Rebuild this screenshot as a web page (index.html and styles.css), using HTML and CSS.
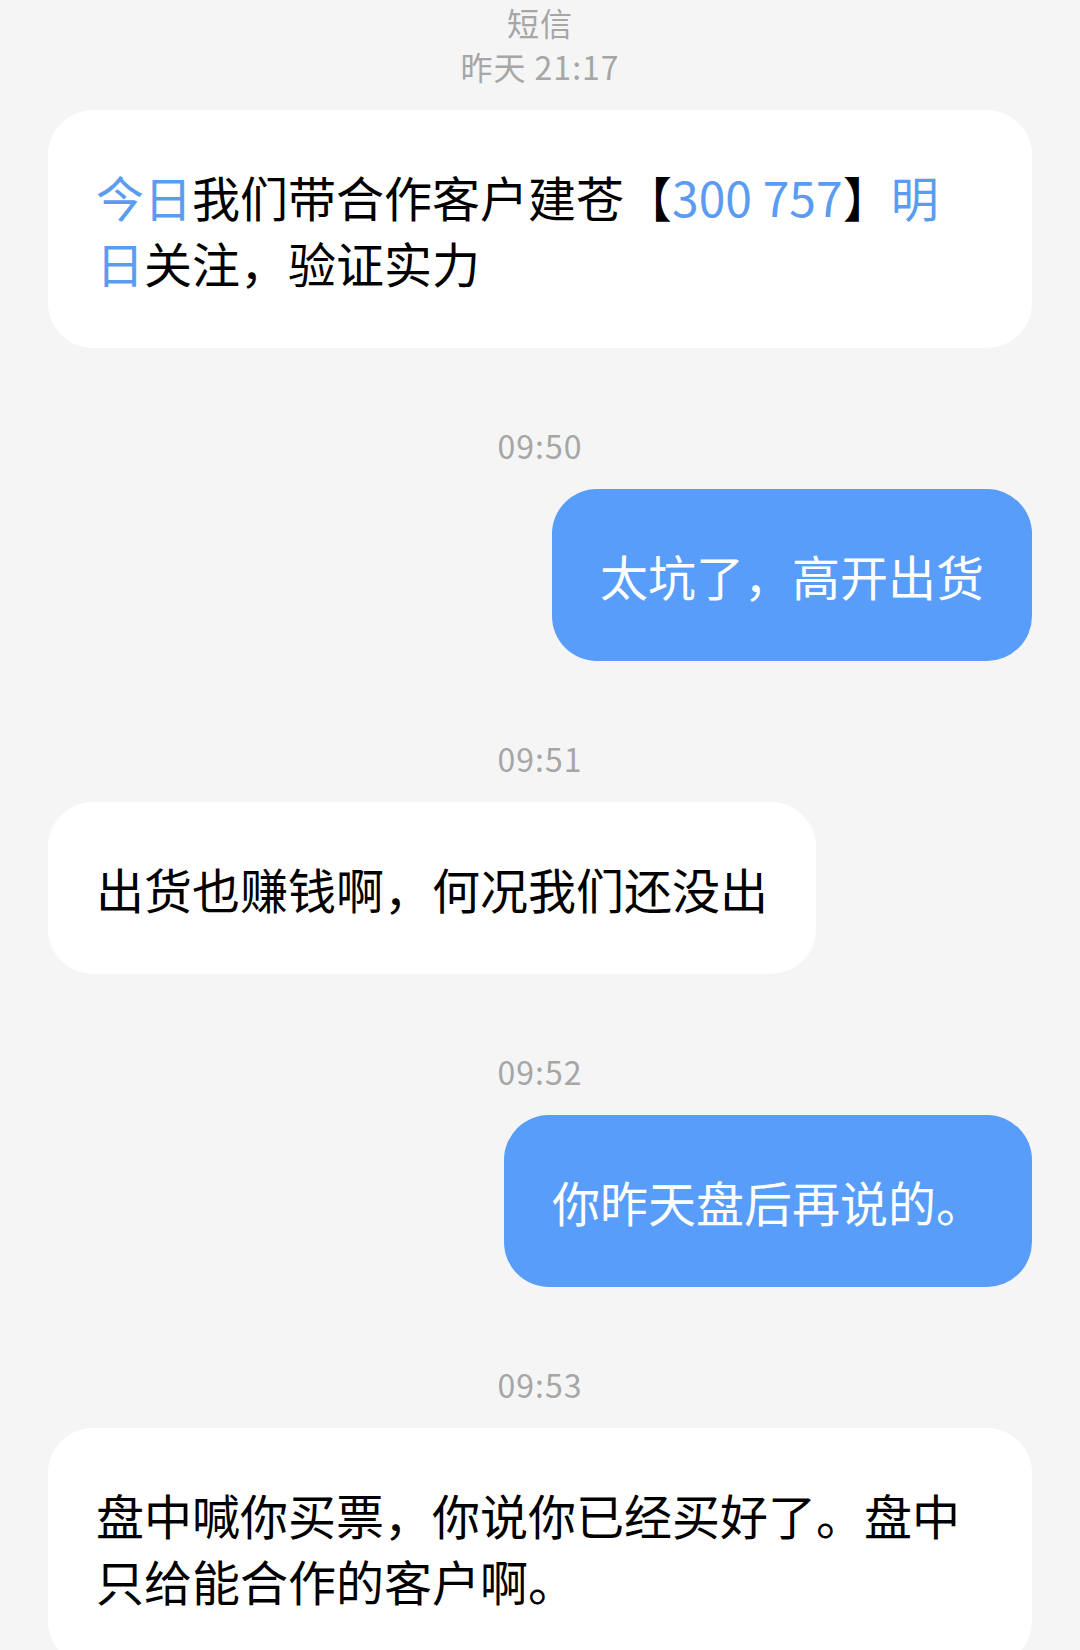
FILE: index.html
```html
<!DOCTYPE html>
<html lang="zh-CN">
<head>
<meta charset="utf-8">
<title>短信</title>
<link rel="stylesheet" href="styles.css">
</head>
<body>
<div class="thread">
  <div class="meta">短信</div>
  <div class="meta">昨天 21:17</div>
  <div class="bubble in full"><span class="hl">今日</span>我们带合作客户建苍【<span class="hl">300 757</span>】<span class="hl">明日</span>关注，验证实力</div>

  <div class="meta stamp">09:50</div>
  <div class="bubble out">太坑了，高开出货</div>

  <div class="meta stamp">09:51</div>
  <div class="bubble in">出货也赚钱啊，何况我们还没出</div>

  <div class="meta stamp">09:52</div>
  <div class="bubble out">你昨天盘后再说的。</div>

  <div class="meta stamp">09:53</div>
  <div class="bubble in full">盘中喊你买票，你说你已经买好了。盘中只给能合作的客户啊。</div>
</div>
</body>
</html>
```

FILE: styles.css
```css
html, body {
  margin: 0;
  padding: 0;
  background: #f5f5f5;
}

body {
  font-family: "Noto Sans CJK SC", "Noto Sans", sans-serif;
  -webkit-font-smoothing: antialiased;
}

.thread {
  display: flex;
  flex-direction: column;
  padding: 0 48px 40px;
}

.meta {
  align-self: center;
  font-size: 32px;
  line-height: 44px;
  color: #a6a6a6;
  letter-spacing: 1px;
}

.stamp {
  margin-top: 75px;
}

.bubble {
  margin-top: 22px;
  padding: 53px 48px;
  border-radius: 45px;
  font-size: 48px;
  line-height: 66px;
  color: #000;
  box-sizing: border-box;
  max-width: 100%;
}

.bubble.in {
  align-self: flex-start;
  background: #ffffff;
}

.bubble.full {
  align-self: stretch;
}

.bubble.out {
  align-self: flex-end;
  background: #589df9;
  color: #ffffff;
}

.hl {
  color: #5a9cf0;
}
```
